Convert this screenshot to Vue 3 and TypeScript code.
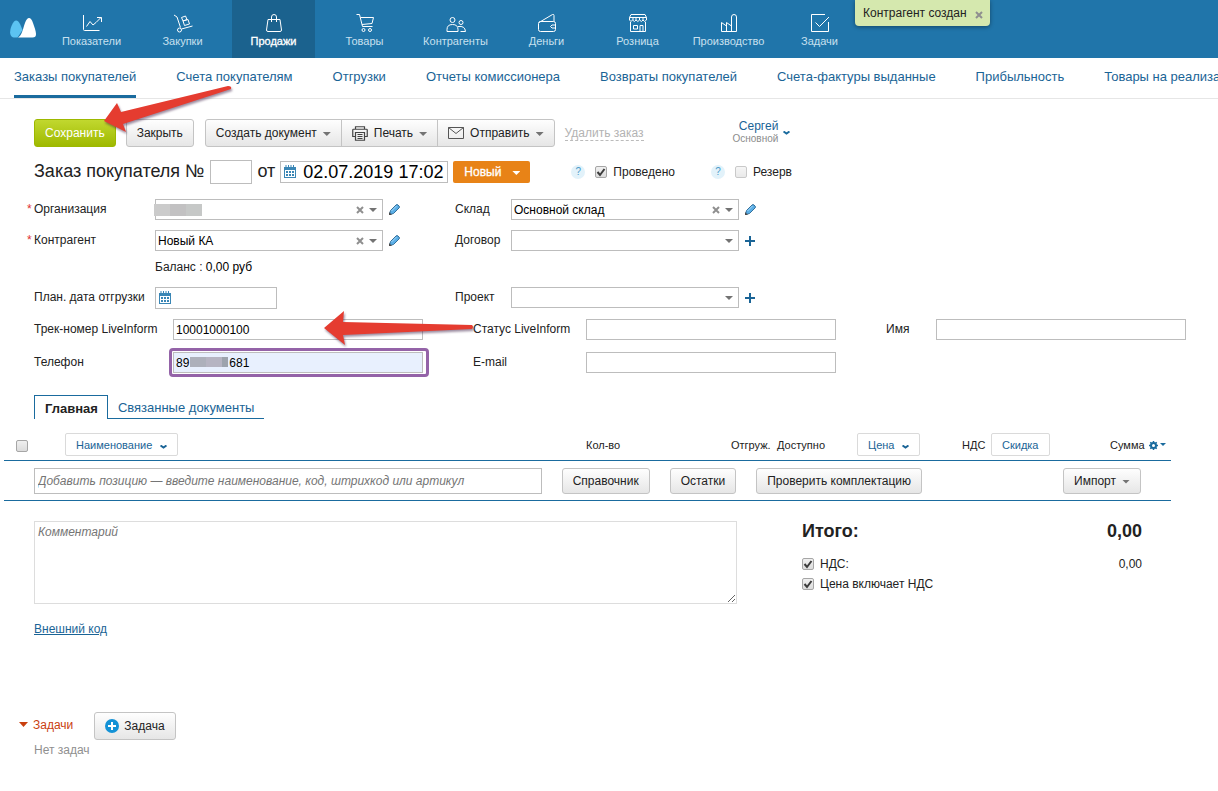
<script setup lang="ts">
import { ref } from 'vue'

interface NavItem { label: string; icon: string; active?: boolean }

const nav: NavItem[] = [
  { label: 'Показатели', icon: 'M1.500 1v14.500q0 1 1 1H17.500M4.500 12.500l3.500-5 3 3.500 3-2.500L19 3.500M15 3.500H19.500V8' },
  { label: 'Закупки', icon: 'M1 1l3 2 3.500 10.500M8.500 15l11-3M4.500 16a2 2 0 1 0 4 0a2 2 0 1 0-4 0M8.500 3.500l4-1.500 1.500 3.500-4 1.500zM10 7l5-1.500 1.500 4.500-5 1.500z' },
  { label: 'Продажи', icon: 'M4 5.500h12l1.500 10.500q0 1.500-1.500 1.500h-12q-1.500 0-1.500-1.500zM7.500 8V3q0-2.500 2.500-2.500t2.500 2.500V8', active: true },
  { label: 'Товары', icon: 'M1.500.500h3l3 12h10M5.500 3.500h13l-1.500 6-10 1M7 16a1.500 1.500 0 1 0 3 0a1.500 1.500 0 1 0-3 0M13.500 16a1.500 1.500 0 1 0 3 0a1.500 1.500 0 1 0-3 0' },
  { label: 'Контрагенты', icon: 'M4 6a2.500 2.500 0 1 0 5 0a2.500 2.500 0 1 0-5 0M1 17.500v-2q0-5 5.500-5t5.500 5v2zM13 8.500a2 2 0 1 0 4 0a2 2 0 1 0-4 0M12 12.500q7-1 7.500 5h-5' },
  { label: 'Деньги', icon: 'M2 8.500L15.500.500q1.500-.500 1.500 1v6M3.500 7.500h13q2 0 2 2v6q0 2-2 2h-13q-2 0-2-2v-6q0-2 2-2M18.500 11H15q-3 1.500 0 3h3.500' },
  { label: 'Розница', icon: 'M3 .500h14M3 .500L1.500 3.500M17 .500l1.500 3M1.500 3.500h17V6q-2 3-3.500 0q-1.500 3-3.500 0q-1.500 3-3.500 0q-1.500 3-3.500 0q-1.500 3-3 0zM5 3.500V6M8 3.500V6M11.500 3.500V6M15 3.500V6M2.500 8v9.500h15V8M5.500 11.500h4v3.500h-4zM12 17V11.500h3V17' },
  { label: 'Производство', icon: 'M2.500 17.500v-9l5 3.500V8.500l5 3.500V3q0-2.500 2.500-2.500T17.500 3v14.500zM7.500 12v5.500M12.500 12v5.500' },
  { label: 'Задачи', icon: 'M15 .500H1.500v17h17V8M5.500 8.500l4 4L19 3' }
]

const sections = ['Заказы покупателей', 'Счета покупателям', 'Отгрузки', 'Отчеты комиссионера', 'Возвраты покупателей', 'Счета-фактуры выданные', 'Прибыльность', 'Товары на реализации']

const orderNumber = ref('')
const orderDate = ref('02.07.2019 17:02')
const shipDate = ref('')
const posted = ref(true)
const reserve = ref(false)
const vat = ref(true)
const vatIncluded = ref(true)
const allRows = ref(false)
const track = ref('10001000100')
const phone = ref('89            681')
const liveStatus = ref('')
const customerName = ref('')
const email = ref('')
const position = ref('')
const comment = ref('')
</script>

<template>
  <div class="page">
    <header class="top">
      <a class="logo" href="#" aria-label="Главная страница">
        <svg width="26" height="20" viewBox="0 0 26 20"><path d="M5 19.500C-1 19.500-.500 13 1.500 8c3-7 6-7 9-1l2 5-5 7.500z" fill="#5cc3f2" /><path d="M8 19.500c4-2 5-9 7-14.500 2.500-7 6-6 8 0 2.500 7 5.500 14.500-.500 14.500z" fill="#fff" /></svg>
      </a>
      <nav class="modules">
        <a v-for="item in nav" :key="item.label" href="#" class="module" :class="{ active: item.active }">
          <svg width="20" height="18" viewBox="0 0 20 18"><path :d="item.icon" /></svg>
          <span>{{ item.label }}</span>
        </a>
      </nav>
      <div class="toast" role="status">
        <span>Контрагент создан</span>
        <button type="button" class="cross" aria-label="Закрыть уведомление"><svg width="8" height="8" viewBox="0 0 8 8"><path d="M1 1l6 6M7 1L1 7" /></svg></button>
      </div>
    </header>

    <nav class="sections">
      <a v-for="(s, i) in sections" :key="s" href="#" :class="{ current: i === 0 }">{{ s }}</a>
    </nav>

    <main>
      <div class="toolbar">
        <button type="button" class="btn save">Сохранить</button>
        <button type="button" class="btn">Закрыть</button>
        <div class="group">
          <button type="button" class="btn">Создать документ<i class="caret"></i></button>
          <button type="button" class="btn">
            <svg class="ico" width="16" height="15" viewBox="0 0 16 15"><path d="M3.500 3V.750h9V3M3 10.500H.750V4q0-.750.750-.750h13q.750 0 .750.750v6.500H13M3.500 6.500h9v7.750h-9zM5.500 8.500h5M5.500 10.500h5M5.500 12.500h5" fill="none" stroke="#444" stroke-width="1.200" /></svg>Печать<i class="caret"></i>
          </button>
          <button type="button" class="btn">
            <svg class="ico" width="16" height="12" viewBox="0 0 16 12"><path d="M.500.500h15v11H.500zM.500.500L8 6.500l7.500-6" fill="none" stroke="#555" /></svg>Отправить<i class="caret"></i>
          </button>
        </div>
        <a href="#" class="remove">Удалить заказ</a>
        <button type="button" class="owner">
          <span class="who"><b>Сергей</b><small>Основной</small></span>
          <svg width="7" height="4" viewBox="0 0 7 4"><path d="M.500.500l3 2 3-2" /></svg>
        </button>
      </div>

      <div class="title">
        <label for="number">Заказ покупателя №</label>
        <input id="number" v-model="orderNumber" class="box number" type="text">
        <label for="date">от</label>
        <span class="dated moment">
          <input id="date" v-model="orderDate" class="box" type="text">
          <svg class="cal" width="12" height="13" viewBox="0 0 12 13"><path d="M0 2h12v11H0z" fill="#3a86b5" /><path d="M1 5h10v7H1z" fill="#fff" /><path d="M2 0v3M4.500 0v3M7 0v3M9.500 0v3" stroke="#3a86b5" /><path d="M2 7h8M2 10h8" stroke="#3a86b5" stroke-width="2" stroke-dasharray="2 1" /></svg>
        </span>
        <button type="button" class="state">Новый<i class="caret"></i></button>
        <span class="flag first">
          <button type="button" class="help" aria-label="Справка о проведении">?</button>
          <span class="tick"><input id="posted" v-model="posted" type="checkbox"><svg v-if="posted" viewBox="0 0 12 12"><path d="M2.500 6l2.500 3 4.500-6" /></svg></span>
          <label for="posted">Проведено</label>
        </span>
        <span class="flag second">
          <button type="button" class="help" aria-label="Справка о резерве">?</button>
          <span class="tick faint"><input id="reserve" v-model="reserve" type="checkbox"><svg v-if="reserve" viewBox="0 0 12 12"><path d="M2.500 6l2.500 3 4.500-6" /></svg></span>
          <label for="reserve">Резерв</label>
        </span>
      </div>

      <div class="fields">
        <label for="org" class="required">Организация</label>
        <div class="combo">
          <select id="org"><option></option></select>
          <span class="veil org"></span>
          <button type="button" class="cross" aria-label="Очистить организацию"><svg width="8" height="8" viewBox="0 0 8 8"><path d="M1 1l6 6M7 1L1 7" /></svg></button>
          <i class="caret"></i>
        </div>
        <button type="button" class="act" aria-label="Изменить организацию"><svg width="11" height="11" viewBox="0 0 11 11"><path d="M.500 10.500l1-4L7 1q1-1 2 0l1 1q1 1 0 2L4.500 9.500z" fill="#5aaee6" stroke="#34719c" /><path d="M2.500 7l5-5" stroke="#a8d8f8" /><path d="M0 11v-3l3 3z" fill="#4a4a4a" /></svg></button>
        <label for="store">Склад</label>
        <div class="combo">
          <select id="store"><option>Основной склад</option></select>
          <button type="button" class="cross" aria-label="Очистить склад"><svg width="8" height="8" viewBox="0 0 8 8"><path d="M1 1l6 6M7 1L1 7" /></svg></button>
          <i class="caret"></i>
        </div>
        <button type="button" class="act" aria-label="Изменить склад"><svg width="11" height="11" viewBox="0 0 11 11"><path d="M.500 10.500l1-4L7 1q1-1 2 0l1 1q1 1 0 2L4.500 9.500z" fill="#5aaee6" stroke="#34719c" /><path d="M2.500 7l5-5" stroke="#a8d8f8" /><path d="M0 11v-3l3 3z" fill="#4a4a4a" /></svg></button>

        <label for="agent" class="required">Контрагент</label>
        <div class="combo">
          <select id="agent"><option>Новый КА</option></select>
          <button type="button" class="cross" aria-label="Очистить контрагента"><svg width="8" height="8" viewBox="0 0 8 8"><path d="M1 1l6 6M7 1L1 7" /></svg></button>
          <i class="caret"></i>
        </div>
        <button type="button" class="act" aria-label="Изменить контрагента"><svg width="11" height="11" viewBox="0 0 11 11"><path d="M.500 10.500l1-4L7 1q1-1 2 0l1 1q1 1 0 2L4.500 9.500z" fill="#5aaee6" stroke="#34719c" /><path d="M2.500 7l5-5" stroke="#a8d8f8" /><path d="M0 11v-3l3 3z" fill="#4a4a4a" /></svg></button>
        <label for="contract">Договор</label>
        <div class="combo"><select id="contract"><option></option></select><i class="caret"></i></div>
        <button type="button" class="act" aria-label="Добавить договор"><svg width="10" height="10" viewBox="0 0 10 10"><path d="M0 5h10M5 0v10" stroke="#1a6496" stroke-width="2" /></svg></button>

        <div class="balance">Баланс : <span>0,00 руб</span></div>

        <label for="ship">План. дата отгрузки</label>
        <span class="dated ship">
          <input id="ship" v-model="shipDate" class="box" type="text">
          <svg class="cal" width="12" height="13" viewBox="0 0 12 13"><path d="M0 2h12v11H0z" fill="#3a86b5" /><path d="M1 5h10v7H1z" fill="#fff" /><path d="M2 0v3M4.500 0v3M7 0v3M9.500 0v3" stroke="#3a86b5" /><path d="M2 7h8M2 10h8" stroke="#3a86b5" stroke-width="2" stroke-dasharray="2 1" /></svg>
        </span>
        <span></span>
        <label for="project">Проект</label>
        <div class="combo"><select id="project"><option></option></select><i class="caret"></i></div>
        <button type="button" class="act" aria-label="Добавить проект"><svg width="10" height="10" viewBox="0 0 10 10"><path d="M0 5h10M5 0v10" stroke="#1a6496" stroke-width="2" /></svg></button>
      </div>

      <div class="extra">
        <label for="track">Трек-номер LiveInform</label>
        <div class="cell">
          <input id="track" v-model="track" class="box" type="text">
          <svg class="arrow track-arrow" width="154" height="40" viewBox="0 0 154 40"><path d="M1 18L21 1l-1 11L149 15q2 2 0 4L20 25l2 10z" /></svg>
        </div>
        <label for="status" class="c4">Статус LiveInform</label>
        <input id="status" v-model="liveStatus" class="box" type="text">
        <label for="name" class="c7">Имя</label>
        <input id="name" v-model="customerName" class="box" type="text">

        <label for="phone">Телефон</label>
        <div class="cell marked">
          <input id="phone" v-model="phone" class="box" type="text">
          <span class="veil digits"></span>
        </div>
        <label for="email" class="c4">E-mail</label>
        <input id="email" v-model="email" class="box" type="text">
      </div>

      <div class="tabs" role="tablist">
        <button type="button" role="tab" aria-selected="true" class="on">Главная</button>
        <button type="button" role="tab" aria-selected="false">Связанные документы</button>
      </div>

      <table class="goods">
        <colgroup><col class="w-check"><col><col class="w-qty"><col class="w-ship"><col class="w-avail"><col class="w-price"><col class="w-vat"><col class="w-disc"><col class="w-sum"></colgroup>
        <thead>
          <tr>
            <th><span class="tick all"><input v-model="allRows" type="checkbox" aria-label="Выбрать все"><svg v-if="allRows" viewBox="0 0 12 12"><path d="M2.500 6l2.500 3 4.500-6" /></svg></span></th>
            <th><button type="button" class="col">Наименование<svg width="7" height="4" viewBox="0 0 7 4"><path d="M.500.500l3 2 3-2" /></svg></button></th>
            <th>Кол-во</th>
            <th>Отгруж.</th>
            <th>Доступно</th>
            <th><button type="button" class="col">Цена<svg width="7" height="4" viewBox="0 0 7 4"><path d="M.500.500l3 2 3-2" /></svg></button></th>
            <th>НДС</th>
            <th><button type="button" class="col">Скидка</button></th>
            <th>Сумма<button type="button" class="gear" aria-label="Настроить столбцы"><svg width="17" height="9" viewBox="0 0 17 9"><circle cx="4.500" cy="4.500" r="2.500" fill="none" stroke="#1a6b9e" stroke-width="2" /><path d="M4.500 0v2M4.500 7v2M0 4.500h2M7 4.500h2M1.300 1.300l1.500 1.500M6.200 6.200l1.500 1.500M1.300 7.700l1.500-1.500M6.200 2.800l1.500-1.500" stroke="#1a6b9e" stroke-width="1.500" /><path d="M11 2h6l-3 3z" fill="#1a6b9e" /></svg></button></th>
          </tr>
        </thead>
        <tbody>
          <tr>
            <td colspan="9">
              <div class="adder">
                <input v-model="position" class="box" type="text" aria-label="Добавить позицию" placeholder="Добавить позицию — введите наименование, код, штрихкод или артикул">
                <button type="button" class="btn">Справочник</button>
                <button type="button" class="btn">Остатки</button>
                <button type="button" class="btn">Проверить комплектацию</button>
                <button type="button" class="btn import">Импорт<i class="caret"></i></button>
              </div>
            </td>
          </tr>
        </tbody>
      </table>

      <div class="summary">
        <textarea v-model="comment" aria-label="Комментарий" placeholder="Комментарий"></textarea>
        <div class="totals">
          <div class="grand"><span>Итого:</span><span>0,00</span></div>
          <div class="line">
            <span class="tick"><input id="vat" v-model="vat" type="checkbox"><svg v-if="vat" viewBox="0 0 12 12"><path d="M2.500 6l2.500 3 4.500-6" /></svg></span>
            <label for="vat">НДС:</label><span class="amount">0,00</span>
          </div>
          <div class="line">
            <span class="tick"><input id="incl" v-model="vatIncluded" type="checkbox"><svg v-if="vatIncluded" viewBox="0 0 12 12"><path d="M2.500 6l2.500 3 4.500-6" /></svg></span>
            <label for="incl">Цена включает НДС</label>
          </div>
        </div>
      </div>

      <a href="#" class="code">Внешний код</a>

      <section class="tasks">
        <div class="tasks-head">
          <button type="button" class="fold"><i></i>Задачи</button>
          <button type="button" class="btn"><svg class="plus" width="14" height="14" viewBox="0 0 14 14"><circle cx="7" cy="7" r="7" fill="#1492d6" /><path d="M3 7h8M7 3v8" stroke="#fff" stroke-width="2" /></svg>Задача</button>
        </div>
        <p>Нет задач</p>
      </section>
    </main>

    <svg class="arrow save-arrow" width="134" height="54" viewBox="0 0 134 54"><path d="M2 38L15 20l4 9L126 3q4 0 3 3L21 41l3 8z" /></svg>
  </div>
</template>

<style>
body {
  margin: 0;
  background: #fff;
}
</style>

<style scoped>
.page {
  position: relative;
  overflow: hidden;
  min-height: 100vh;
  color: #222;
  font: 12px/14px "Liberation Sans", Arial, sans-serif;
}
.page *, .page *::before { box-sizing: border-box; }
button, input, select, textarea { font: inherit; color: inherit; margin: 0; border-radius: 0; }
button { cursor: pointer; padding: 0; border: 0; background: none; white-space: nowrap; }
a { text-decoration: none; }

.top { position: relative; display: flex; height: 58px; background: #2075aa; }
.logo { width: 50px; padding: 18px 0 0 10px; }
.modules { display: flex; gap: 8px; }
.module {
  display: flex; flex-direction: column; align-items: center; gap: 3px;
  width: 83px; padding-top: 14px; color: #c8e0ef; font-size: 11px; line-height: 13px;
}
.module svg { fill: none; stroke: #fff; stroke-width: 1; stroke-linejoin: round; overflow: visible; }
.module.active { background: #1b628e; color: #fff; -webkit-text-stroke: 0.3px #fff; }
.toast {
  position: absolute; left: 855px; top: 0; display: flex; align-items: center; gap: 8px;
  height: 26px; padding: 0 7px 0 8px; border-radius: 0 0 4px 4px;
  background: #d5e8ae; box-shadow: 0 1px 4px rgba(0, 0, 0, .4);
}
.cross { display: flex; }
.cross svg { fill: none; stroke: #8f8f8f; stroke-width: 2; }
.toast .cross { padding-top: 3px; }

.sections { display: flex; gap: 40px; height: 41px; padding-left: 14px; border-bottom: 1px solid #e6e6e6; }
.sections a { flex: none; height: 40px; padding-top: 11px; color: #1a6496; font-size: 13px; line-height: 15px; }
.sections .current { border-bottom: 3px solid #1a6b9e; }

main { padding: 20px 32px 20px 34px; }
.btn {
  height: 28px; padding: 0 10px; border: 1px solid #c4c4c4; border-radius: 3px;
  background: linear-gradient(#fefefe, #e6e6e6); color: #222;
}
.save { border-color: #9db800; background: linear-gradient(#c1d82f, #9fb900); color: #fff; }
.caret {
  display: inline-block; width: 8px; height: 4px; margin-left: 6px; vertical-align: 1px;
  background: #737373; clip-path: polygon(0 0, 100% 0, 50% 100%);
}
.toolbar { display: flex; gap: 10px; align-items: center; }
.group { display: flex; margin-left: 1px; }
.group .btn { display: flex; align-items: center; border-radius: 0; }
.group .caret { margin-top: 2px; }
.group .btn + .btn { margin-left: -1px; }
.group .btn:first-child { border-radius: 3px 0 0 3px; }
.group .btn:last-child { border-radius: 0 3px 3px 0; }
.ico { margin-right: 6px; }
.remove { border-bottom: 1px dashed #bbb; color: #b3b3b3; }
.owner { display: flex; align-items: center; gap: 5px; margin-left: 79px; }
.owner svg { fill: none; stroke: #1a6b9e; stroke-width: 2; }
.who { display: flex; flex-direction: column; align-items: flex-end; padding-bottom: 2px; }
.who b { color: #1a6496; font-weight: 400; line-height: 13px; }
.who small { color: #8c8c8c; font-size: 10px; line-height: 12px; }

.box { height: 21px; padding: 0 2px; border: 1px solid #bdbdbd; background: #fff; color: #000; outline: 0; }
.title { display: flex; align-items: center; height: 24px; margin-top: 13px; font-size: 18px; line-height: 24px; }
.title > label { padding-bottom: 2px; }
.title .number { width: 42px; height: 24px; margin: 0 5px 0 6px; }
.dated { position: relative; display: block; }
.cal { position: absolute; left: 4px; top: 4px; }
.moment { margin-left: 5px; }
.moment .box { display: block; width: 168px; height: 22px; padding-left: 22px; }
.state {
  height: 22px; margin-left: 5px; padding: 0 10px 0 11px; border-radius: 2px;
  background: #e88317; color: #fff; font-size: 12px; line-height: 20px; -webkit-text-stroke: 0.3px #fff;
}
.state .caret { margin-left: 11px; background: #fff; }
.flag { display: flex; align-items: center; font-size: 12px; line-height: 14px; }
.first { margin-left: 41px; }
.second { margin-left: 36px; }
.help { width: 14px; height: 14px; margin-right: 10px; border-radius: 50%; background: #e2f2fa; color: #4a9ac8; font-size: 10px; line-height: 14px; }
.tick { position: relative; display: block; width: 12px; height: 12px; }
.tick input {
  display: block; width: 12px; height: 12px; appearance: none;
  border: 1px solid #a6a6a6; border-radius: 2px; background: linear-gradient(#f0f0f0, #dcdcdc);
}
.tick svg { position: absolute; inset: 0; fill: none; stroke: #3c3c3c; stroke-width: 2; pointer-events: none; }
.tick + label { margin-left: 6px; }
.faint { opacity: .6; }

.fields {
  display: grid; grid-template-columns: 121px 228px 72px 56px 228px 1fr;
  row-gap: 10px; margin-top: 15px;
}
.fields label, .extra label { height: 20px; line-height: 20px; white-space: nowrap; }
.required { position: relative; }
.required::before { content: "*"; position: absolute; left: -7px; color: #e03030; }
.combo { position: relative; }
.combo select {
  display: block; width: 100%; height: 21px; padding: 0 36px 0 2px; appearance: none;
  border: 1px solid #bdbdbd; background: #fff; color: #000;
}
.combo .cross { position: absolute; right: 19px; top: 7px; }
.combo .caret { position: absolute; right: 6px; top: 9px; pointer-events: none; }
.act { display: flex; align-items: center; height: 21px; padding-left: 6px; }
.veil { position: absolute; background: linear-gradient(90deg, #cbcbcb 33%, #c2c1c2 33% 67%, #c6c8c7 67%); }
.org { left: -1px; top: 5px; width: 48px; height: 12px; }
.balance { grid-column: 2 / -1; height: 16px; line-height: 14px; margin-top: -1px; margin-bottom: 1px; }
.balance span { color: #000; }
.ship .box { display: block; width: 122px; height: 22px; padding-left: 22px; }

.extra {
  display: grid; grid-template-columns: 139px 250px 50px 113px 250px 50px 50px 250px;
  row-gap: 12px; margin-top: 10px;
}
.c4 { grid-column: 4; }
.c7 { grid-column: 7; }
.cell { position: relative; }
.cell .box { display: block; width: 100%; }
.marked .box { background: #e8f0fe; }
.marked::before {
  content: ""; position: absolute; inset: -4px -6px -4px -4px;
  border: 3px solid #9463a8; border-radius: 4px; pointer-events: none;
}
.digits { left: 17px; top: 5px; width: 38px; height: 10px; background: linear-gradient(90deg, #adb0bb 42%, #b6b4c2 42% 84%, #9da3ad 84%); }

.tabs { display: flex; width: 230px; margin-top: 22px; border-bottom: 1px solid #1a6b9e; }
.tabs button { height: 23px; padding: 2px 10px 0; color: #1a6496; font-size: 13px; }
.tabs .on { height: 24px; margin-bottom: -1px; padding: 3px 9px 0 10px; border: 1px solid #1a6b9e; border-bottom: 0; background: #fff; color: #222; font-weight: 700; }

.goods { width: calc(100% + 15px); margin: 11px 0 0 -30px; border-collapse: collapse; table-layout: fixed; }
.w-check { width: 57px; }
.w-qty { width: 145px; }
.w-ship { width: 46px; }
.w-avail { width: 80px; }
.w-price { width: 105px; }
.w-vat { width: 29px; }
.w-disc { width: 119px; }
.w-sum { width: 65px; }
.goods tr { border-bottom: 1px solid #1a6b9e; }
.goods th { height: 30px; padding: 0 0 0 4px; font-size: 11px; font-weight: 400; text-align: left; white-space: nowrap; }
.goods td { padding: 0; }
.all { margin: 2px 0 0 8px; }
.col { height: 23px; padding: 0 10px; border: 1px solid #dadada; border-radius: 2px; background: #fff; color: #1a6496; }
.col svg { margin-left: 8px; vertical-align: 0; fill: none; stroke: #1a6496; stroke-width: 2; }
.gear { display: inline-block; margin-left: 4px; vertical-align: middle; }
.gear svg { display: block; }
.adder { display: flex; gap: 20px; height: 39px; padding: 7px 30px 6px; }
.adder .box { flex: 1; height: 26px; padding: 0 3px; font-style: italic; }
.adder .box::placeholder, textarea::placeholder { color: #757575; font-style: italic; }
.adder .btn { height: 26px; }
.import { margin-left: 121px; }

.summary { display: flex; gap: 65px; margin: 20px 44px 0 0; }
textarea { flex: 1; height: 83px; padding: 3px; border: 1px solid #ddd; outline: 0; }
.totals { width: 340px; }
.grand { display: flex; justify-content: space-between; margin-bottom: 13px; font-size: 18px; font-weight: 700; line-height: 20px; }
.line { display: flex; align-items: center; height: 20px; }
.amount { margin-left: auto; }

.code { display: inline-block; margin-top: 18px; color: #1a6496; text-decoration: underline; }
.tasks { margin-top: 76px; }
.tasks-head { display: flex; gap: 21px; margin-left: -15px; }
.fold { display: flex; align-items: center; gap: 5px; height: 26px; color: #c9400f; }
.fold i { width: 9px; height: 5px; background: #c9400f; clip-path: polygon(0 0, 100% 0, 50% 100%); }
.plus { margin-right: 5px; vertical-align: -3px; }
.tasks p { margin: 3px 0 0; color: #8f8f8f; }

.arrow { position: absolute; z-index: 2; fill: #e53c30; pointer-events: none; filter: drop-shadow(1px 2px 1px rgba(60, 30, 70, .5)); }
.save-arrow { left: 102px; top: 83px; }
.track-arrow { left: 150px; top: -9px; }
</style>
